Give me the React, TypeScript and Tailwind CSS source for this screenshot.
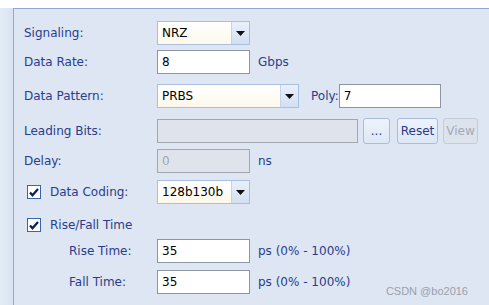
import React from 'react'

const font = { fontFamily: '"DejaVu Sans", Verdana, sans-serif' }

function Select({ value, width }: { value: string; width: string }) {
  return (
    <div className={`flex h-6 ${width} border border-[#a9bfe0] bg-white`}>
      <div className="flex flex-1 items-center bg-gradient-to-b from-white to-[#fdf8ea] pl-1 text-black">{value}</div>
      <div className="flex w-[18px] items-center justify-center border-l border-[#c3d3ea] bg-gradient-to-b from-[#e9f0fa] to-[#d3e0f2]">
        <svg width="9" height="5" viewBox="0 0 9 5"><path d="M0 0h9L4.5 5z" fill="#111" /></svg>
      </div>
    </div>
  )
}

function Input({ value, width, disabled }: { value: string; width: string; disabled?: boolean }) {
  return (
    <div
      className={`flex h-6 ${width} items-center border pl-1 ${
        disabled ? 'border-[#a3a7ad] bg-[#dfe4ec] text-[#a0a6b0]' : 'border-[#8c95a3] bg-white text-black'
      }`}
    >
      {value}
    </div>
  )
}

function Check() {
  return (
    <div className="flex h-[14px] w-[14px] items-center justify-center border border-[#3b63a8] bg-white">
      <svg width="10" height="9" viewBox="0 0 10 9"><path d="M1 4.5l2.5 2.8L9 1" stroke="#0c1e55" strokeWidth="2.2" fill="none" /></svg>
    </div>
  )
}

function Btn({ children, disabled, width }: { children: React.ReactNode; disabled?: boolean; width: string }) {
  return (
    <div
      className={`flex h-[26px] ${width} items-center justify-center rounded-[3px] border ${
        disabled
          ? 'border-[#c4ccd8] bg-[#dde3ec] text-[#a3aab6]'
          : 'border-[#a9bcd9] bg-gradient-to-b from-[#eef3fb] to-[#dde7f5] text-[#24398a]'
      }`}
    >
      {children}
    </div>
  )
}

export default function App() {
  return (
    <div style={font} className="h-[305px] w-[489px] overflow-hidden bg-white text-[12px] text-[#2a3d8c]">
      <div className="mt-2 flex h-[297px] bg-[#dfe7f3]">
        <div className="w-[13px] bg-gradient-to-r from-[#e3ebf6] to-[#d9e3f1]" />
        <div className="flex-1 border-l border-t border-[#8fa9d3] bg-[#dde6f2] pl-[10px] pt-3">
          {/* Signaling */}
          <div className="flex h-6 items-center">
            <div className="w-[133px]">Signaling:</div>
            <Select value="NRZ" width="w-[93px]" />
          </div>

          {/* Data rate */}
          <div className="mt-[5px] flex h-6 items-center">
            <div className="w-[133px]">Data Rate:</div>
            <Input value="8" width="w-[93px]" />
            <span className="ml-2">Gbps</span>
          </div>

          {/* Data pattern */}
          <div className="mt-[10px] flex h-6 items-center">
            <div className="w-[133px]">Data Pattern:</div>
            <Select value="PRBS" width="w-[142px]" />
            <span className="ml-[12px]">Poly:</span>
            <Input value="7" width="w-[102px]" />
          </div>

          {/* Leading bits */}
          <div className="mt-[10px] flex h-[26px] items-center">
            <div className="w-[133px]">Leading Bits:</div>
            <Input value="" width="w-[201px]" disabled />
            <div className="ml-[5px]"><Btn width="w-[27px]">...</Btn></div>
            <div className="ml-[7px]"><Btn width="w-[41px]">Reset</Btn></div>
            <div className="ml-[5px]"><Btn width="w-[35px]" disabled>View</Btn></div>
          </div>

          {/* Delay */}
          <div className="mt-[5px] flex h-6 items-center">
            <div className="w-[133px]">Delay:</div>
            <Input value="0" width="w-[93px]" disabled />
            <span className="ml-2">ns</span>
          </div>

          {/* Data coding */}
          <div className="mt-[7px] flex h-6 items-center">
            <div className="flex w-[133px] items-center pl-[3px]">
              <Check />
              <span className="ml-[9px]">Data Coding:</span>
            </div>
            <Select value="128b130b" width="w-[93px]" />
          </div>

          {/* Rise/Fall */}
          <div className="mt-[10px] flex h-[22px] items-center pl-[3px]">
            <Check />
            <span className="ml-[9px]">Rise/Fall Time</span>
          </div>

          <div className="mt-[3px] flex h-6 items-center">
            <div className="w-[133px] pl-[45px]">Rise Time:</div>
            <Input value="35" width="w-[93px]" />
            <span className="ml-2">ps (0% - 100%)</span>
          </div>

          <div className="mt-[7px] flex h-6 items-center">
            <div className="w-[133px] pl-[45px]">Fall Time:</div>
            <Input value="35" width="w-[93px]" />
            <span className="ml-2">ps (0% - 100%)</span>
            <span className="ml-auto mr-[21px] mt-[18px] text-[11px] text-[#9ba1aa]" style={{ fontFamily: '"Liberation Sans", Arial, sans-serif' }}>
              CSDN @bo2016
            </span>
          </div>
        </div>
      </div>
    </div>
  )
}
